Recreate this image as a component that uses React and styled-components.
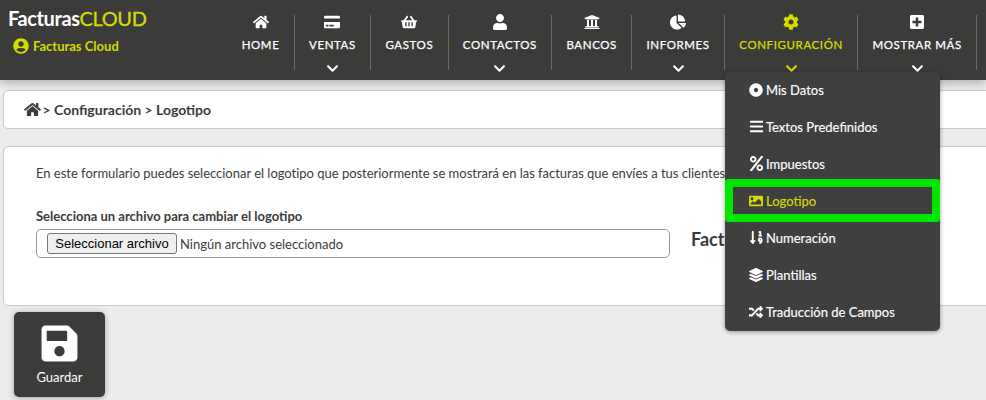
import React from 'react';
import styled, { createGlobalStyle } from 'styled-components';
import {
  FaHome, FaCreditCard, FaShoppingBasket, FaUser, FaUniversity, FaChartPie, FaCog, FaPlusSquare,
  FaChevronDown, FaUserCircle, FaDotCircle, FaBars, FaPercent, FaImage, FaSortNumericDown,
  FaLayerGroup, FaRandom, FaSave,
} from 'react-icons/fa';

const GlobalStyle = createGlobalStyle`
  html, body { margin: 0; padding: 0; height: 400px; overflow: hidden; background: #ececec; }
  body { font-family: Lato, "Liberation Sans", sans-serif; color: #3b3b3a; }
  * { box-sizing: border-box; }
`;

const Page = styled.div`
  position: relative;
  width: 986px;
  height: 400px;
  overflow: hidden;
`;

const Header = styled.header`
  position: relative;
  z-index: 2;
  display: flex;
  height: 80px;
  background: #3b3b3a;
  box-shadow: 0 2px 10px rgba(0, 0, 0, 0.3);
`;

const Brand = styled.div`
  width: 227.4px;
  padding: 6px 0 0 8px;
`;

const Logo = styled.div`
  font-size: 20px;
  line-height: 24px;
  font-weight: 700;
  letter-spacing: -0.4px;
  color: #fff;
`;

const LogoAccent = styled.span`
  color: #d4dc00;
  font-weight: 400;
  -webkit-text-stroke: 0.3px #d4dc00;
`;

const Account = styled.div`
  display: flex;
  align-items: center;
  gap: 4px;
  margin: 7px 0 0 5px;
  font-size: 13px;
  line-height: 18px;
  font-weight: 700;
  color: #d4dc00;
  svg { width: 16px; height: 16px; }
`;

const Nav = styled.nav`
  display: flex;
  align-items: flex-start;
  padding-top: 15px;
`;

const NavItem = styled.div`
  display: flex;
  flex-direction: column;
  align-items: center;
  height: 55px;
  padding: 0 14.3px;
  border-right: 1px solid #6a6a69;
  color: ${p => (p.$active ? '#d4dc00' : '#fff')};
`;

const NavIcon = styled.span`
  display: flex;
  align-items: center;
  justify-content: center;
  height: 16px;
  margin-top: -1px;
  svg { width: 16px; height: 16px; }
`;

const NavLabel = styled.span`
  margin-top: 7px;
  font-size: 11.5px;
  line-height: 16px;
  font-weight: 400;
  letter-spacing: 0.6px;
  -webkit-text-stroke: 0.25px currentColor;
  white-space: nowrap;
`;

const NavChevron = styled.span`
  display: flex;
  margin-top: 9px;
  svg { width: 13px; height: 13px; }
`;

const Content = styled.main`
  display: flex;
  flex-direction: column;
  gap: 17px;
  padding: 10px 0 0 3px;
  width: 1000px;
`;

const Card = styled.section`
  background: #fff;
  border: 1px solid #cacaca;
  border-radius: 5px;
`;

const Breadcrumb = styled(Card)`
  display: flex;
  align-items: center;
  gap: 1.5px;
  height: 39px;
  padding-left: 20px;
  font-size: 14px;
  font-weight: 700;
  svg { width: 17px; height: 15px; }
`;

const FormCard = styled(Card)`
  height: 160px;
  padding: 17px 0 0 32px;
`;

const Intro = styled.p`
  margin: 0;
  font-size: 13px;
  line-height: 18px;
  letter-spacing: -0.02px;
  white-space: nowrap;
`;

const FormRow = styled.div`
  display: flex;
  align-items: flex-start;
  margin-top: 25px;
`;

const Field = styled.div`
  width: 634px;
`;

const FieldLabel = styled.div`
  font-size: 13px;
  line-height: 18px;
  font-weight: 700;
`;

const FileBox = styled.div`
  display: flex;
  align-items: center;
  gap: 3px;
  height: 29px;
  margin-top: 4px;
  padding-left: 10px;
  border: 1px solid #999;
  border-radius: 5px;
  font-size: 13px;
`;

const FileButton = styled.button`
  width: 130px;
  height: 21px;
  padding: 0;
  background: #efefef;
  border: 1px solid #767676;
  border-radius: 3px;
  font-family: "Liberation Sans", Arial, sans-serif;
  font-size: 13px;
  color: #000;
`;

const Preview = styled.div`
  margin: 21px 0 0 21px;
  font-size: 18px;
  line-height: 22px;
  font-weight: 700;
  white-space: nowrap;
`;

const Menu = styled.ul`
  position: absolute;
  z-index: 3;
  top: 72px;
  left: 725px;
  width: 215px;
  height: 259px;
  margin: 0;
  padding: 0;
  list-style: none;
  background: #3f3f3f;
  border-radius: 5px;
  box-shadow: 0 1px 4px rgba(0, 0, 0, 0.4);
`;

const MenuItem = styled.li`
  position: relative;
  display: flex;
  align-items: center;
  gap: ${p => (p.$narrow ? '2px' : '3px')};
  height: 37px;
  padding: 0 0 2px 24px;
  font-size: 13px;
  font-weight: 400;
  -webkit-text-stroke: 0.15px currentColor;
  color: ${p => (p.$active ? '#d4dc00' : '#fff')};
  svg { width: auto; height: ${p => (p.$narrow ? '15px' : '14px')}; }
  ${p => p.$active && `
    &::after {
      content: '';
      position: absolute;
      inset: -4px 0 -2px 0;
      border: 8px solid #00e600;
      border-radius: 3px;
    }
  `}
`;

const SaveButton = styled.button`
  position: absolute;
  z-index: 1;
  top: 312px;
  left: 14px;
  display: flex;
  flex-direction: column;
  align-items: center;
  width: 91px;
  height: 85px;
  padding: 11px 0 0;
  background: #3b3b3a;
  border: 0;
  border-radius: 5px;
  color: #fff;
  font-family: Lato, sans-serif;
  font-size: 13px;
  box-shadow: 0 1px 6px rgba(0, 0, 0, 0.3);
  svg { width: 41px; height: 41px; }
  span { margin-top: 4px; line-height: 18px; }
`;

const navItems = [
  { label: 'HOME', icon: FaHome },
  { label: 'VENTAS', icon: FaCreditCard, more: true },
  { label: 'GASTOS', icon: FaShoppingBasket },
  { label: 'CONTACTOS', icon: FaUser, more: true },
  { label: 'BANCOS', icon: FaUniversity },
  { label: 'INFORMES', icon: FaChartPie, more: true },
  { label: 'CONFIGURACIÓN', icon: FaCog, more: true, active: true },
  { label: 'MOSTRAR MÁS', icon: FaPlusSquare, more: true },
];

const menuItems = [
  { label: 'Mis Datos', icon: FaDotCircle },
  { label: 'Textos Predefinidos', icon: FaBars, narrow: true },
  { label: 'Impuestos', icon: FaPercent, narrow: true },
  { label: 'Logotipo', icon: FaImage, active: true },
  { label: 'Numeración', icon: FaSortNumericDown, narrow: true },
  { label: 'Plantillas', icon: FaLayerGroup },
  { label: 'Traducción de Campos', icon: FaRandom },
];

export default function App() {
  return (
    <Page>
      <GlobalStyle />
      <Header>
        <Brand>
          <Logo>Facturas<LogoAccent>CLOUD</LogoAccent></Logo>
          <Account><FaUserCircle /> Facturas Cloud</Account>
        </Brand>
        <Nav>
          {navItems.map(({ label, icon: Icon, more, active }) => (
            <NavItem key={label} $active={active}>
              <NavIcon><Icon /></NavIcon>
              <NavLabel>{label}</NavLabel>
              {more && <NavChevron><FaChevronDown /></NavChevron>}
            </NavItem>
          ))}
        </Nav>
      </Header>
      <Content>
        <Breadcrumb><FaHome /> &gt; Configuración &gt; Logotipo</Breadcrumb>
        <FormCard>
          <Intro>En este formulario puedes seleccionar el logotipo que posteriormente se mostrará en las facturas que envíes a tus clientes. El tamaño máximo es de 2Mb.</Intro>
          <FormRow>
            <Field>
              <FieldLabel>Selecciona un archivo para cambiar el logotipo</FieldLabel>
              <FileBox>
                <FileButton type="button">Seleccionar archivo</FileButton>
                Ningún archivo seleccionado
              </FileBox>
            </Field>
            <Preview>FacturasCLOUD</Preview>
          </FormRow>
        </FormCard>
      </Content>
      <Menu>
        {menuItems.map(({ label, icon: Icon, active, narrow }) => (
          <MenuItem key={label} $active={active} $narrow={narrow}><Icon /> {label}</MenuItem>
        ))}
      </Menu>
      <SaveButton type="button"><FaSave /><span>Guardar</span></SaveButton>
    </Page>
  );
}
